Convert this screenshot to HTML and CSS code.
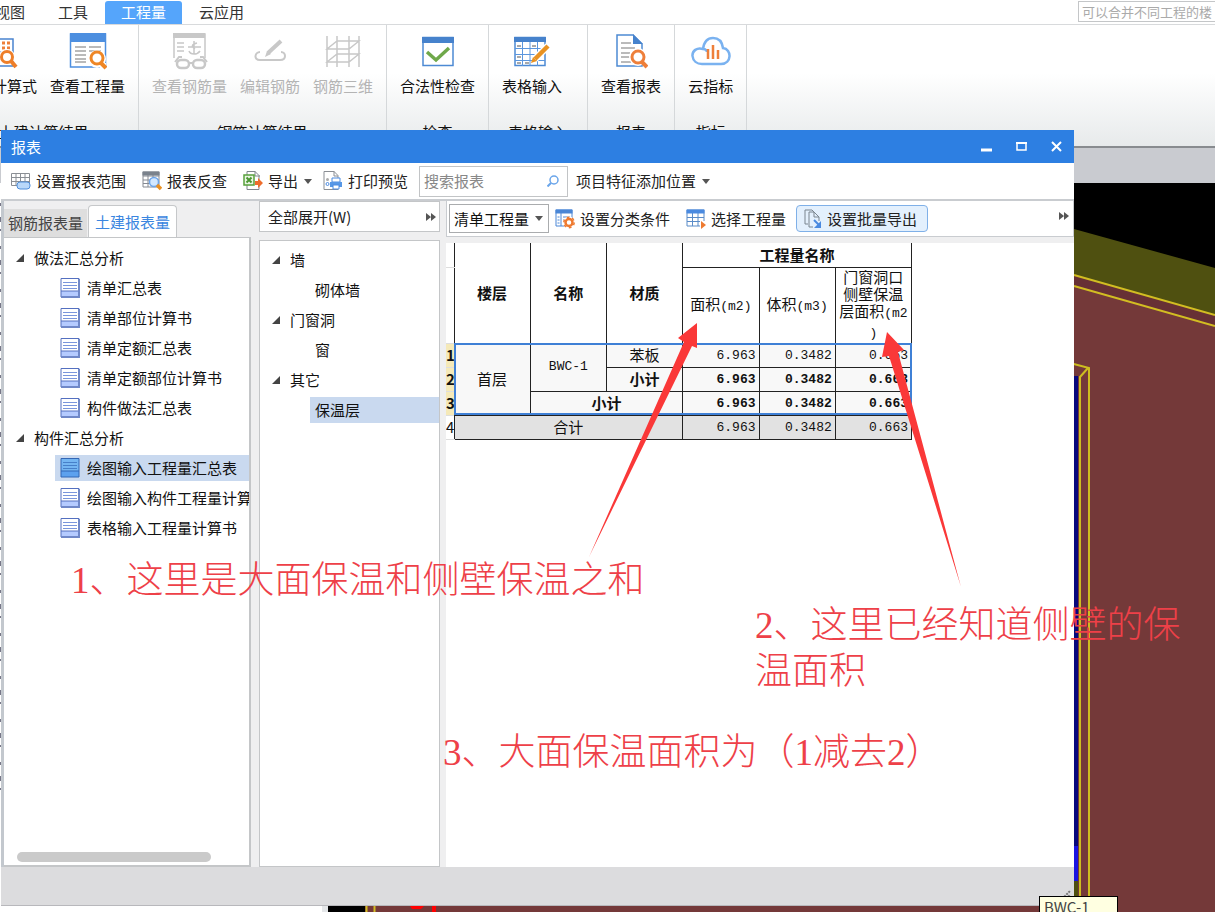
FILE: index.html
```
<!DOCTYPE html>
<html lang="zh-CN">
<head>
<meta charset="utf-8">
<title>报表</title>
<link rel="stylesheet" href="styles.css">
</head>
<body>
<svg class="defs" aria-hidden="true">
  <symbol id="doc" viewBox="0 0 20 20">
    <path d="M1 .5h18v18H1z" fill="#fff"/><path d="M1 13h18v6H1z" fill="#b5cbff"/>
    <path d="M1 .5h18v18.5H1zM1 13h18" fill="none" stroke="#5470c0"/>
    <path d="M19 1v18H1" fill="none" stroke="#7088c8" stroke-width="2"/>
    <path d="M3 4.500h14M3 7.500h14M3 10.500h14" stroke="#7a96dc"/>
  </symbol>
  <symbol id="docsel" viewBox="0 0 20 20">
    <path d="M1 .5h18v18.500H1z" fill="#74b5f2"/><path d="M1 13h18v6H1z" fill="#5da1ee"/>
    <path d="M1 .5h18v18.500H1zM1 13h18" fill="none" stroke="#3266b5"/>
    <path d="M3 4.500h14M3 7.500h14M3 10.500h14" stroke="#467fc9"/>
  </symbol>
  <symbol id="tri" viewBox="0 0 8 8"><path d="M8 0v8H0z" fill="#444"/></symbol>
  <symbol id="caret" viewBox="0 0 8 5"><path d="M0 0h8L4 5z" fill="#555"/></symbol>
  <symbol id="more" viewBox="0 0 10 8"><path d="M0 0l5 4-5 4zM5 0l5 4-5 4z" fill="#555"/></symbol>
</svg>
<div class="app">
  <header class="tabs">
    <nav class="tab-list">
      <a class="tab" href="#view">视图</a>
      <a class="tab" href="#tools">工具</a>
      <a class="tab tab-active" href="#quantity">工程量</a>
      <a class="tab" href="#cloud">云应用</a>
    </nav>
    <input class="help-search" type="text" aria-label="帮助搜索" placeholder="可以合并不同工程的楼">
  </header>

  <section class="ribbon">
    <div class="group group-first">
      <div class="tools">
        <button class="tool"><svg width="36" height="38" viewBox="0 0 36 38"><path d="M4 7h27v27H4z" fill="#fff" stroke="#4a84d0" stroke-width="1.500"/><path d="M4 20h27" stroke="#4a84d0"/><path d="M15 11h15M15 16h15" stroke="#ee7f3a" stroke-width="3" stroke-dasharray="3 2"/><circle cx="25" cy="25" r="8" fill="#fff"/><circle cx="25" cy="25" r="5.500" fill="#fff" stroke="#ee7f2a" stroke-width="3"/><path d="M29 29l5 6" stroke="#ee7f2a" stroke-width="4"/></svg><span>查看计算式</span></button>
        <button class="tool"><svg width="38" height="38" viewBox="0 0 38 38"><path d="M1.500 2h35v33h-35z" fill="#fff" stroke="#4d8fe0" stroke-width="1.500"/><path d="M1 1h36v9H1z" fill="#4d8fe0"/><path d="M6 15h11M6 19h11M6 23h11M6 27h11M6 30h11M20 15h12M20 19h12" stroke="#777" stroke-width="1.200"/><circle cx="28" cy="27" r="9" fill="#fff"/><path d="M31 31h6v6h-6z" fill="#fff"/><circle cx="28" cy="26" r="6" fill="#fff" stroke="#ee8626" stroke-width="3"/><path d="M32 31l5 5" stroke="#ee8626" stroke-width="4"/></svg><span>查看工程量</span></button>
      </div>
      <div class="group-name">土建计算结果</div>
    </div>
    <div class="group">
      <div class="tools">
        <button class="tool" disabled><svg width="38" height="38" viewBox="0 0 38 38" fill="none" stroke="#c8c8c8"><path d="M3 26V2h31v24" stroke-width="1.500"/><path d="M2 1h32v5H2z" fill="#c8c8c8" stroke="none"/><path d="M6 11h7M6 15h7M6 19h7M23 9v13M17 15h13M26 11q-8 2-2 6M18 19q1 3 5 3t6-3" stroke-width="1.500"/><rect x="6" y="28" width="12" height="8" rx="4" stroke-width="2.500"/><rect x="22" y="28" width="12" height="8" rx="4" stroke-width="2.500"/><path d="M4 30l4-5h3M36 30l-4-5h-3M18 31h4" stroke-width="2"/></svg><span>查看钢筋量</span></button>
        <button class="tool" disabled><svg width="36" height="38" viewBox="0 0 36 38" fill="none" stroke="#c8c8c8"><path d="M8 20c-5 0-7 8 0 8h20c7 0 6-8 1-8" stroke-width="2"/><path d="M16 21L29 9" stroke-width="4"/><path d="M13 25l2-6 4 3z" fill="#c8c8c8" stroke="none"/></svg><span>编辑钢筋</span></button>
        <button class="tool" disabled><svg width="36" height="38" viewBox="0 0 36 38" fill="none" stroke="#c8c8c8" stroke-width="1.500"><path d="M2 4v31M12 4v31M24 4v31M34 4v31M2 17l10-8h22l-10 8zM2 30l10-8h22l-10 8z"/></svg><span>钢筋三维</span></button>
      </div>
      <div class="group-name">钢筋计算结果</div>
    </div>
    <div class="group">
      <div class="tools">
        <button class="tool"><svg width="32" height="38" viewBox="0 0 32 38"><path d="M1 5.500h30v28H1z" fill="#fff" stroke="#4d8ad4" stroke-width="1.500"/><path d="M0 5h32v6H0z" fill="#4682cc"/><path d="M5 20l9 8 13-12" fill="none" stroke="#6fa84a" stroke-width="3.500"/></svg><span>合法性检查</span></button>
      </div>
      <div class="group-name">检查</div>
    </div>
    <div class="group group-input">
      <div class="tools">
        <button class="tool"><svg width="36" height="38" viewBox="0 0 36 38"><path d="M1 5.500h30v28H1z" fill="#fff" stroke="#4d8ad4" stroke-width="1.500"/><path d="M0 5h32v5H0z" fill="#4682cc"/><path d="M8.500 10v24M16 10v24M23.500 10v24M1 16.500h30M1 22.500h30M1 28.500h30" stroke="#5b96dd"/><path d="M3 14h4M18 14h4M3 25h4M11 31h4M3 31h4" stroke="#555"/><path d="M21 27L34 14" stroke="#fff" stroke-width="7"/><path d="M21 27L34 14" stroke="#e89222" stroke-width="4.500"/><path d="M17 31l2-6 4 4z" fill="#e89222"/></svg><span>表格输入</span></button>
      </div>
      <div class="group-name">表格输入</div>
    </div>
    <div class="group">
      <div class="tools">
        <button class="tool"><svg width="34" height="38" viewBox="0 0 34 38"><path d="M3 3h16l9 9v22H3z" fill="#fff" stroke="#4d8ad4" stroke-width="1.500"/><path d="M19 2v10h10z" fill="#4682cc"/><path d="M7 11h10M7 16h14M7 21h9M7 25h9M7 30h10" stroke="#777"/><circle cx="24" cy="25" r="9" fill="#fff"/><circle cx="24" cy="25" r="6" fill="#fff" stroke="#ee7f3a" stroke-width="3"/><path d="M28 30l5 5" stroke="#ee7f3a" stroke-width="4"/></svg><span>查看报表</span></button>
      </div>
      <div class="group-name">报表</div>
    </div>
    <div class="group">
      <div class="tools">
        <button class="tool"><svg width="40" height="38" viewBox="0 0 40 38" fill="none"><path d="M12 17C6 15 1 19 1.500 24S6 32 11 32h19c11 0 11-15 2-16C31 9 27 6 22 6c-6 0-9 4-10 11 3 0 4 2 4 3" stroke="#7ab2f0" stroke-width="2.500"/><path d="M17 17v10M22 13v14M27 18v9" stroke="#ee7f3a" stroke-width="2.500"/></svg><span>云指标</span></button>
      </div>
      <div class="group-name">指标</div>
    </div>
  </section>
  <div class="strip"></div>

  <svg class="scene" viewBox="0 0 1215 729" preserveAspectRatio="xMinYMin slice" aria-hidden="true">
    <path d="M0 0h1215v729H0z" fill="#000"/>
    <path d="M1074 46l141 39v60H1074z" fill="#4f5010"/>
    <path d="M1074 92l141 40v597H374V92z" fill="#743939"/>
    <path d="M1074 92l141 40v11l-141-40z" fill="#673035"/>
    <path d="M1074 92l141 40M1074 103l141 40" stroke="#d2bd22" stroke-width="2"/>
    <path d="M1070 193h8v470h-8z" fill="#08087c"/>
    <path d="M1070 663h8v35h-8z" fill="#1b14e0"/><path d="M1070 698h8v31h-8z" fill="#4f5010"/>
    <path d="M1070 180l19 5v544M1080 729V194l8-9" fill="none" stroke="#cdbd20" stroke-width="2"/>
    <path d="M0 0h322v729H0z" fill="#fff"/><path d="M322 0h6v729h-6z" fill="#e4e6e8"/>
    <path d="M365 720h9v9h-9z" fill="#743939"/><path d="M366.500 720v9M374.500 720v9" stroke="#d2bd22" stroke-width="2"/>
    <path d="M410 723h14l-3 3h-9zM432 723h4v6h-4z" fill="#f00"/>
    <path d="M.5 20v598" stroke="#778" stroke-dasharray="3 11 5 7 2 15"/>
  </svg>

  <main class="dialog">
    <header class="titlebar">
      <h1>报表</h1>
      <div class="window-buttons">
        <button aria-label="最小化"><svg width="11" height="11"><path d="M0 9h11" stroke="#fff" stroke-width="3"/></svg></button>
        <button aria-label="最大化"><svg width="11" height="11"><path d="M1 2h9v7H1z" fill="none" stroke="#fff" stroke-width="1.500"/><path d="M0 2h11" stroke="#fff" stroke-width="2"/></svg></button>
        <button aria-label="关闭"><svg width="11" height="11"><path d="M1 1l9 9M10 1l-9 9" stroke="#fff" stroke-width="2"/></svg></button>
      </div>
    </header>

    <div class="toolbar">
      <button class="cmd cmd-wide"><svg width="20" height="20" viewBox="0 0 20 20"><path d="M.5 2.500h18v12H.5zM.5 6.500h18M.5 10.500h18M5 2v12M9.500 2v12M14 2v12" fill="#fff" stroke="#8a8e94"/><rect x="6" y="11" width="13" height="7" rx="3" fill="#b9d8fa" stroke="#4f8edb"/></svg>设置报表范围</button>
      <button class="cmd cmd-wide"><svg width="20" height="20" viewBox="0 0 20 20"><path d="M1 1h16v15H1zM1 5h16M1 9h16M1 12.500h16M6 1v15M11 1v15" fill="#fff" stroke="#868a92"/><path d="M.5.5h17v4H.5z" fill="#7a828c"/><circle cx="12" cy="11" r="4.500" fill="#d3e8ff" stroke="#6da5ea" stroke-width="1.500"/><path d="M15 14l4 4" stroke="#ea9022" stroke-width="3.500"/></svg>报表反查</button>
      <button class="cmd"><svg width="20" height="20" viewBox="0 0 20 20"><path d="M4 .5h8l4 4v14H4z" fill="#fff" stroke="#80868c"/><path d="M12 0v5h5" fill="none" stroke="#80868c"/><path d="M1 4h10v10H1z" fill="#eaf5e4" stroke="#58a13c" stroke-width="1.500"/><path d="M3.500 6.500l5 5M8.500 6.500l-5 5" stroke="#4a9630" stroke-width="2"/><path d="M12 10h3V7l5 5-5 5v-3h-3z" fill="#ee6d2c"/></svg>导出<svg class="caret" width="8" height="5"><use href="#caret"/></svg></button>
      <button class="cmd"><svg width="20" height="20" viewBox="0 0 20 20"><path d="M1 .5h10l4 4v14H1z" fill="#fff" stroke="#8a8e94"/><path d="M11 0v5h4" fill="none" stroke="#8a8e94"/><circle cx="4.500" cy="8.500" r="1.500" fill="#aaa"/><circle cx="4.500" cy="13" r="1.500" fill="none" stroke="#4a8ae0"/><path d="M9 7h8v4H9z" fill="#fff" stroke="#4a8ae0"/><path d="M7 11h12v5H7z" fill="#5797e6"/><path d="M10 14h6v4h-6z" fill="#fff" stroke="#4a8ae0"/></svg>打印预览</button>
      <label class="search"><input type="text" aria-label="搜索报表" placeholder="搜索报表"><svg width="12" height="12" viewBox="0 0 12 12" fill="none" stroke="#6aa5ea"><circle cx="7" cy="5" r="4" stroke-width="1.500"/><path d="M4 8l-3.500 3.500" stroke-width="2"/></svg></label>
      <button class="cmd cmd-last">项目特征添加位置<svg class="caret" width="8" height="5"><use href="#caret"/></svg></button>
    </div>

    <div class="body">
      <section class="pane pane-reports">
        <div class="report-tabs">
          <button class="report-tab">钢筋报表量</button>
          <button class="report-tab report-tab-active">土建报表量</button>
        </div>
        <div class="tree tree-reports">
          <ul>
            <li class="root"><svg width="8" height="8"><use href="#tri"/></svg>做法汇总分析</li>
            <li class="leaf"><svg width="20" height="20"><use href="#doc"/></svg>清单汇总表</li>
            <li class="leaf"><svg width="20" height="20"><use href="#doc"/></svg>清单部位计算书</li>
            <li class="leaf"><svg width="20" height="20"><use href="#doc"/></svg>清单定额汇总表</li>
            <li class="leaf"><svg width="20" height="20"><use href="#doc"/></svg>清单定额部位计算书</li>
            <li class="leaf"><svg width="20" height="20"><use href="#doc"/></svg>构件做法汇总表</li>
            <li class="root"><svg width="8" height="8"><use href="#tri"/></svg>构件汇总分析</li>
            <li class="leaf selected"><svg width="20" height="20"><use href="#docsel"/></svg>绘图输入工程量汇总表</li>
            <li class="leaf"><svg width="20" height="20"><use href="#doc"/></svg>绘图输入构件工程量计算</li>
            <li class="leaf"><svg width="20" height="20"><use href="#doc"/></svg>表格输入工程量计算书</li>
          </ul>
          <div class="scrollbar"></div>
        </div>
      </section>

      <section class="pane pane-parts">
        <button class="expand">全部展开(W)<svg width="10" height="8"><use href="#more"/></svg></button>
        <div class="tree">
          <ul>
            <li class="root"><svg width="8" height="8"><use href="#tri"/></svg>墙</li>
            <li class="leaf">砌体墙</li>
            <li class="root"><svg width="8" height="8"><use href="#tri"/></svg>门窗洞</li>
            <li class="leaf">窗</li>
            <li class="root"><svg width="8" height="8"><use href="#tri"/></svg>其它</li>
            <li class="leaf selected">保温层</li>
          </ul>
        </div>
      </section>

      <section class="pane pane-sheet">
        <div class="sheet-bar">
          <label class="combo"><select aria-label="工程量类型"><option>清单工程量</option><option>定额工程量</option></select><svg width="8" height="5"><use href="#caret"/></svg></label>
          <button class="cmd cmd-wide"><svg width="20" height="20" viewBox="0 0 20 20"><path d="M1 1h16v16H1zM6 4v13M8 8h7M8 11h5M2.500 8h2M2.500 11h2M2.500 14h2" fill="#fff" stroke="#4a86d6"/><path d="M.5.5h17v4H.5z" fill="#4a86d6"/><circle cx="14" cy="13.500" r="6" fill="#fff"/><circle cx="14" cy="13.500" r="3.500" fill="#fff" stroke="#ee7a30" stroke-width="2.500"/><circle cx="14" cy="13.500" r="5.200" fill="none" stroke="#ee7a30" stroke-width="1.500" stroke-dasharray="2.700 2.700"/></svg>设置分类条件</button>
          <button class="cmd"><svg width="20" height="20" viewBox="0 0 20 20"><path d="M1 1h17v16H1zM1 8.500h17M1 12.500h17M6.500 4v13M12 4v13" fill="#fff" stroke="#5b8cc8"/><path d="M.5.5h18v4H.5z" fill="#4a8ae0"/><path d="M14 12h6v7h-6z" fill="#fff"/><path d="M15 12l5 4-5 4z" fill="#ee7a30"/></svg>选择工程量</button>
          <button class="cmd cmd-hot"><svg width="18" height="20" viewBox="0 0 18 20" fill="none" stroke="#7a858f"><path d="M4 15H1V1h7l2 2M5 3h5l5 5v4M5 3v15h4M10 3v5h5"/><path d="M10 11l5 5" stroke="#4a8ae0" stroke-width="2"/><path d="M17 12v7h-7z" fill="#4a8ae0" stroke="none"/></svg>设置批量导出</button>
          <button class="overflow" aria-label="更多"><svg width="10" height="8"><use href="#more"/></svg></button>
        </div>
        <div class="sheet">
          <div class="table-wrap">
            <table>
              <colgroup><col class="c-num"><col><col><col><col><col><col></colgroup>
              <thead>
                <tr><th class="num"></th><th rowspan="2">楼层</th><th rowspan="2">名称</th><th rowspan="2">材质</th><th colspan="3">工程量名称</th></tr>
                <tr class="tall"><th class="num"></th><td>面积<span class="mono">(m2)</span></td><td>体积<span class="mono">(m3)</span></td><td class="wrap">门窗洞口<br>侧壁保温<br>层面积<span class="mono">(m2<br>)</span></td></tr>
              </thead>
              <tbody>
                <tr class="picked"><th class="num">1</th><td rowspan="3">首层</td><td rowspan="2" class="mono">BWC-1</td><td>苯板</td><td class="val">6.963</td><td class="val">0.3482</td><td class="val">0.663</td></tr>
                <tr class="picked"><th class="num">2</th><th>小计</th><th class="val">6.963</th><th class="val">0.3482</th><th class="val">0.663</th></tr>
                <tr class="picked"><th class="num">3</th><th colspan="2">小计</th><th class="val">6.963</th><th class="val">0.3482</th><th class="val">0.663</th></tr>
                <tr class="total"><td class="num">4</td><td colspan="3">合计</td><td class="val">6.963</td><td class="val">0.3482</td><td class="val">0.663</td></tr>
              </tbody>
            </table>
            <div class="selection"></div>
          </div>
        </div>
      </section>
    </div>
    <footer class="status"><svg width="12" height="14" viewBox="0 0 12 14"><path d="M1 12l10-10M5 12l6-6M9 12l2-2" stroke="#777" stroke-width="2" stroke-dasharray="2 1"/></svg></footer>
  </main>

  <div class="tooltip">BWC-1</div>
  <svg class="arrows" width="1215" height="912" aria-hidden="true"><path d="M697 323l-19 15 6 4-95 215 103-211 5 2zM887 332l-5 25 7-1 72 231-63-235 6-2z" fill="#fa3838"/></svg>
  <p class="note note-1">1、这里是大面保温和侧壁保温之和</p>
  <p class="note note-2">2、这里已经知道侧壁的保<br>温面积</p>
  <p class="note note-3">3、大面保温面积为（1减去2）</p>
</div>
</body>
</html>
```
FILE: styles.css
```
* { box-sizing: border-box; }
body { margin: 0; font: 15px/20px "Noto Sans CJK SC", "Noto Sans", sans-serif; color: #222; }
button, input, select { font: inherit; color: inherit; border: 0; background: none; padding: 0; margin: 0; }
ul { list-style: none; margin: 0; padding: 0; }
svg { display: block; flex: none; }
.defs { position: absolute; width: 0; height: 0; }
.app { position: relative; display: flex; flex-direction: column; height: 100vh; overflow: hidden; background: #fff; }

/* ribbon */
.tabs { display: flex; justify-content: space-between; height: 25px; border-bottom: 1px solid #d8dadc; flex: none; }
.tab-list { display: flex; gap: 1px; margin-left: -21px; padding-top: 1px; }
.tab { padding: 1px 16px; color: #333; text-decoration: none; white-space: nowrap; }
.tab-active { background: #55a5fb; color: #fff; border-radius: 3px 3px 0 0; }
.help-search { width: 160px; height: 21px; margin: 1px -23px 0 0; padding: 0 3px; border: 1px solid #c4c6c8; font-size: 13px; }
.help-search::placeholder { color: #aaa; opacity: 1; }
.ribbon { display: flex; height: 121px; flex: none; background: linear-gradient(#fff 40%, #e7eaeb); overflow: hidden; }
.group { display: flex; flex-direction: column; align-items: center; padding: 7px 13px 0; border-right: 1px solid #d5d8da; flex: none; }
.group-first { margin-left: -51px; }
.group-input .tools { padding-right: 12px; }
.tools { display: flex; gap: 13px; }
.tool { display: flex; flex-direction: column; align-items: center; gap: 6px; color: #111; white-space: nowrap; }
.tool:disabled { color: #b4b4b4; }
.group-name { margin-top: 26px; color: #111; }
.strip { height: 37px; flex: none; background: #c9cbd0; border-top: 2px solid #888b8f; }
.scene { width: 100%; flex: 1; min-height: 0; }

/* dialog */
.dialog { position: absolute; left: 1px; top: 130px; right: 141px; bottom: 6px; display: flex; flex-direction: column; background: #efeff0; border-bottom: 1px solid #b8b8bc; }
.titlebar { display: flex; justify-content: space-between; align-items: center; height: 33px; padding: 0 12px 0 10px; background: #2d7fe2; color: #fff; flex: none; }
.titlebar h1 { margin: 0; font-size: 15px; font-weight: 400; }
.window-buttons { display: flex; gap: 24px; }
.toolbar { display: flex; align-items: center; gap: 11px; height: 38px; padding: 0 10px; background: #fff; border-bottom: 2px solid #c9ccd0; flex: none; }
.cmd { display: flex; align-items: center; gap: 5px; white-space: nowrap; }
.cmd-wide { padding-right: 5px; }
.cmd-last { margin-left: -3px; }
.caret { margin-left: 1px; }
.search { display: flex; align-items: center; width: 149px; height: 31px; padding: 0 8px 0 4px; border: 1px solid #c2c4c6; }
.search input { flex: 1; min-width: 0; outline: 0; }
.search input::placeholder { color: #888; opacity: 1; }
.body { display: flex; flex: 1; min-height: 0; }
.pane { display: flex; flex-direction: column; min-width: 0; }
.pane-reports { width: 250px; margin-right: 8px; border-left: 3px solid #c3c8ce; }
.report-tabs { display: flex; align-items: flex-end; height: 36px; gap: 1px; flex: none; }
.report-tab { height: 28px; padding: 0 4px; background: #dedede; color: #444; }
.report-tab-active { height: 32px; padding: 0 6px; background: #fff; color: #3a86e0; border: 1px solid #c6c8ca; border-bottom: 0; border-radius: 4px 4px 0 0; }
.tree { flex: 1; padding-top: 4px; background: #fff; border: 1px solid #c4c6c8; overflow: hidden; }
.tree li { display: flex; align-items: center; height: 26px; margin: 2px 0 4px; white-space: nowrap; color: #111; }
.tree .root { gap: 10px; padding-left: 12px; }
.tree .leaf { margin-left: 50px; padding-left: 5px; gap: 7px; }
.tree .selected { background: #c9d9ef; }
.tree-reports { display: flex; flex-direction: column; justify-content: space-between; padding: 5px 0 3px; border-left: 0; border-right-width: 2px; border-bottom-width: 2px; }
.tree.tree-reports .leaf { margin-left: 51px; }
.scrollbar { width: 194px; height: 10px; margin-left: 13px; border-radius: 5px; background: #cacaca; flex: none; }
.pane-parts { width: 181px; margin-right: 6px; gap: 8px; }
.expand { display: flex; justify-content: space-between; align-items: center; height: 31px; padding: 0 3px 0 8px; border: 1px solid #c4c6c8; background: #fff; flex: none; }
.pane-sheet { flex: 1; }
.sheet-bar { display: flex; align-items: center; gap: 6px; height: 36px; padding: 0 4px 0 2px; background: #fff; border: 1px solid #c9ccd0; border-top: 0; flex: none; }
.combo { display: flex; align-items: center; width: 100px; height: 29px; padding: 0 5px 0 4px; border: 1px solid #aaacae; color: #111; }
.combo select { flex: 1; min-width: 0; appearance: none; }
.sheet-bar .cmd-wide { padding-right: 10px; }
.cmd-hot { height: 27px; margin-left: 4px; padding: 0 10px 0 7px; background: #e3f0fd; border: 1px solid #7fb0e8; border-radius: 4px; }
.overflow { margin-left: auto; margin-bottom: 6px; }
.sheet { flex: 1; margin-top: 6px; background: #fff; overflow: hidden; }
.status { display: flex; justify-content: flex-end; align-items: flex-start; height: 38px; padding: 22px 3px 0; background: #dcdcde; flex: none; }

/* quantity table */
.table-wrap { position: relative; width: 466px; }
table { width: 466px; table-layout: fixed; border-collapse: collapse; color: #111; }
.c-num { width: 8px; }
tr { height: 24px; }
.tall { height: 76px; }
th, td { padding: 0; text-align: center; border: 1px solid #222; line-height: 20px; }
thead tr:first-child > * { border-top: 0; }
th { font-weight: 700; }
.mono, .val { font-family: "Liberation Mono", "Noto Sans CJK SC", monospace; font-size: 13px; }
.val { text-align: right; padding: 2px 3px 0 0; }
.wrap { line-height: 17px; }
.picked td, .picked th { background: #f8f8f8; }
.total td { background: #e2e2e2; }
.num, .picked .num, .total .num { border: 0; border-bottom: 1px solid #ddd; background: #fff; text-align: center; }
.picked .num { background: #f5e9b8; }
.selection { position: absolute; left: 8px; right: 0; top: 100px; height: 72px; border: 2px solid #3f80d6; }

/* layers above the dialog */
.tooltip { position: absolute; left: 1039px; top: 896px; width: 79px; padding: 0 4px; border: 1px solid #000; background: #ffffe1; color: #444; }
.arrows { position: absolute; left: 0; top: 0; pointer-events: none; }
.note { position: absolute; margin: 0; font: 300 37px/46px "Liberation Serif", "Noto Sans CJK SC", serif; color: #ee4048; white-space: nowrap; }
.note-1 { left: 71px; top: 558px; }
.note-2 { left: 755px; top: 603px; }
.note-3 { left: 443px; top: 730px; }
```
